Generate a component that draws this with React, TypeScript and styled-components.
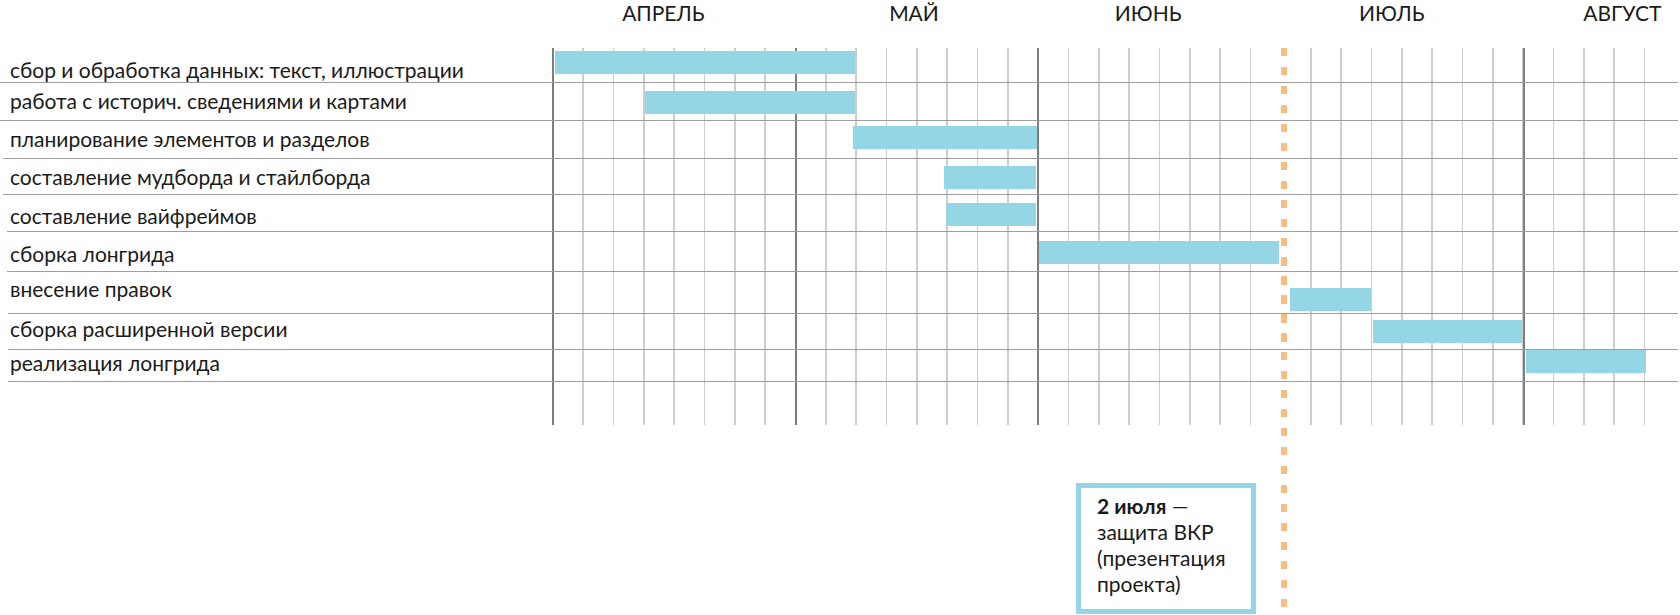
import React from 'react';
import styled, { createGlobalStyle } from 'styled-components';

const GRID_LEFT = 552;
const COL = 30.333;
const MONTH = COL * 8;
const GRID_WIDTH = 1096;
const SKIP = 24; // the 1 July line is replaced by the deadline marker

const GlobalStyle = createGlobalStyle`
  html, body { margin: 0; padding: 0; background: #ffffff; }
  body {
    font-family: Lato, "Noto Sans", sans-serif;
    color: #1b1b1b;
    -webkit-font-smoothing: antialiased;
  }
`;

const Page = styled.div`
  position: relative;
  width: 1680px;
  height: 615px;
  overflow: hidden;
`;

const Header = styled.div`
  display: grid;
  grid-template-columns: repeat(4, ${MONTH}px) 1fr;
  box-sizing: border-box;
  height: 48px;
  padding: 1.6px 0 0 ${GRID_LEFT}px;
`;

const MonthLabel = styled.div<{ $dx: number }>`
  font-size: 21px;
  line-height: 22px;
  text-align: center;
  text-transform: uppercase;
  white-space: nowrap;
  padding-left: ${(p) => Math.max(0, p.$dx * 2)}px;
  padding-right: ${(p) => Math.max(0, -p.$dx * 2)}px;
`;

const dark = '#7e7e7e';
const light = '#cdcdcd';
const m = (k: number) => (MONTH * k).toFixed(2);
const after = COL * (SKIP + 1);

const Body = styled.div`
  padding-bottom: 43px;
  background-image:
    linear-gradient(
      to right,
      ${dark} 0 2px,
      transparent 2px ${m(1)}px,
      ${dark} ${m(1)}px calc(${m(1)}px + 2px),
      transparent calc(${m(1)}px + 2px) ${m(2)}px,
      ${dark} ${m(2)}px calc(${m(2)}px + 2px),
      transparent calc(${m(2)}px + 2px) ${m(4)}px,
      ${dark} ${m(4)}px calc(${m(4)}px + 2px),
      transparent calc(${m(4)}px + 2px)
    ),
    repeating-linear-gradient(to right, ${light} 0 1.6px, transparent 1.6px ${COL}px),
    repeating-linear-gradient(to right, ${light} 0 1.6px, transparent 1.6px ${COL}px);
  background-size:
    ${GRID_WIDTH}px 100%,
    ${(COL * SKIP).toFixed(2)}px 100%,
    ${(GRID_WIDTH - after).toFixed(2)}px 100%;
  background-position:
    ${GRID_LEFT}px 0,
    ${GRID_LEFT}px 0,
    ${(GRID_LEFT + after).toFixed(2)}px 0;
  background-repeat: no-repeat;
`;

const Row = styled.div<{ $h: number; $inset: number }>`
  display: grid;
  grid-template-columns: ${(p) => GRID_LEFT - p.$inset}px 1fr;
  box-sizing: border-box;
  height: ${(p) => p.$h}px;
  margin-left: ${(p) => p.$inset}px;
  margin-right: 2px;
  border-bottom: 1px solid #9d9d9d;
`;

const Label = styled.div<{ $top: number; $inset: number }>`
  padding-left: ${(p) => 10 - p.$inset}px;
  padding-top: ${(p) => p.$top}px;
  font-size: 21px;
  line-height: 24px;
  white-space: nowrap;
`;

const Track = styled.div`
  min-width: 0;
`;

const Bar = styled.div`
  height: 23px;
  background: #94d5e6;
`;

const Deadline = styled.div`
  position: absolute;
  left: 1281px;
  top: 48px;
  width: 6px;
  height: 564px;
  background: repeating-linear-gradient(
    to bottom,
    #fbbd7e 0 8.5px,
    transparent 8.5px 19px
  );
`;

const Footer = styled.div`
  padding: 58px 0 0 1076px;
`;

const Note = styled.div`
  box-sizing: border-box;
  width: 180px;
  height: 131px;
  border: 5px solid #94d5e6;
  padding: 5px 8px 0 16px;
  font-size: 21px;
  line-height: 26px;
  white-space: nowrap;
`;

const Strong = styled.span`
  font-weight: 700;
`;

const months = [
  { name: 'Апрель', dx: -10 },
  { name: 'Май', dx: -2 },
  { name: 'Июнь', dx: -10.5 },
  { name: 'Июль', dx: -9.5 },
  { name: 'Август', dx: 21 },
];

type Task = {
  label: string;
  h: number;
  inset: number;
  labelTop: number;
  barTop: number;
  start: number;
  end: number;
};

const tasks: Task[] = [
  { label: 'сбор и обработка данных: текст, иллюстрации', h: 35, inset: 0, labelTop: 9.6, barTop: 3, start: 554.5, end: 855 },
  { label: 'работа с историч. сведениями и картами', h: 38, inset: 0, labelTop: 6.2, barTop: 8.3, start: 645.3, end: 855 },
  { label: 'планирование элементов и разделов', h: 38, inset: 3, labelTop: 5.6, barTop: 5, start: 853.3, end: 1036.8 },
  { label: 'составление мудборда и стайлборда', h: 36, inset: 3, labelTop: 5.9, barTop: 7, start: 944.3, end: 1036 },
  { label: 'составление вайфреймов', h: 37, inset: 7, labelTop: 8.9, barTop: 8.3, start: 946, end: 1036 },
  { label: 'сборка лонгрида', h: 40, inset: 7, labelTop: 9.6, barTop: 8.5, start: 1039, end: 1278.7 },
  { label: 'внесение правок', h: 42, inset: 8, labelTop: 4.6, barTop: 15.7, start: 1289.7, end: 1371.3 },
  { label: 'сборка расширенной версии', h: 36, inset: 8, labelTop: 2.6, barTop: 6, start: 1373.3, end: 1522 },
  { label: 'реализация лонгрида', h: 32, inset: 8, labelTop: 0.6, barTop: 0, start: 1525.7, end: 1646.5 },
];

export default function App() {
  return (
    <>
      <GlobalStyle />
      <Page>
        <Header>
          {months.map((mo) => (
            <MonthLabel key={mo.name} $dx={mo.dx}>
              {mo.name}
            </MonthLabel>
          ))}
        </Header>
        <Body>
          {tasks.map((t) => (
            <Row key={t.label} $h={t.h} $inset={t.inset}>
              <Label $top={t.labelTop} $inset={t.inset}>
                {t.label}
              </Label>
              <Track>
                <Bar
                  style={{
                    marginTop: t.barTop,
                    marginLeft: t.start - GRID_LEFT,
                    width: t.end - t.start,
                  }}
                />
              </Track>
            </Row>
          ))}
        </Body>
        <Footer>
          <Note>
            <Strong>2 июля</Strong> —
            <br />
            защита ВКР
            <br />
            (презентация
            <br />
            проекта)
          </Note>
        </Footer>
        <Deadline />
      </Page>
    </>
  );
}
